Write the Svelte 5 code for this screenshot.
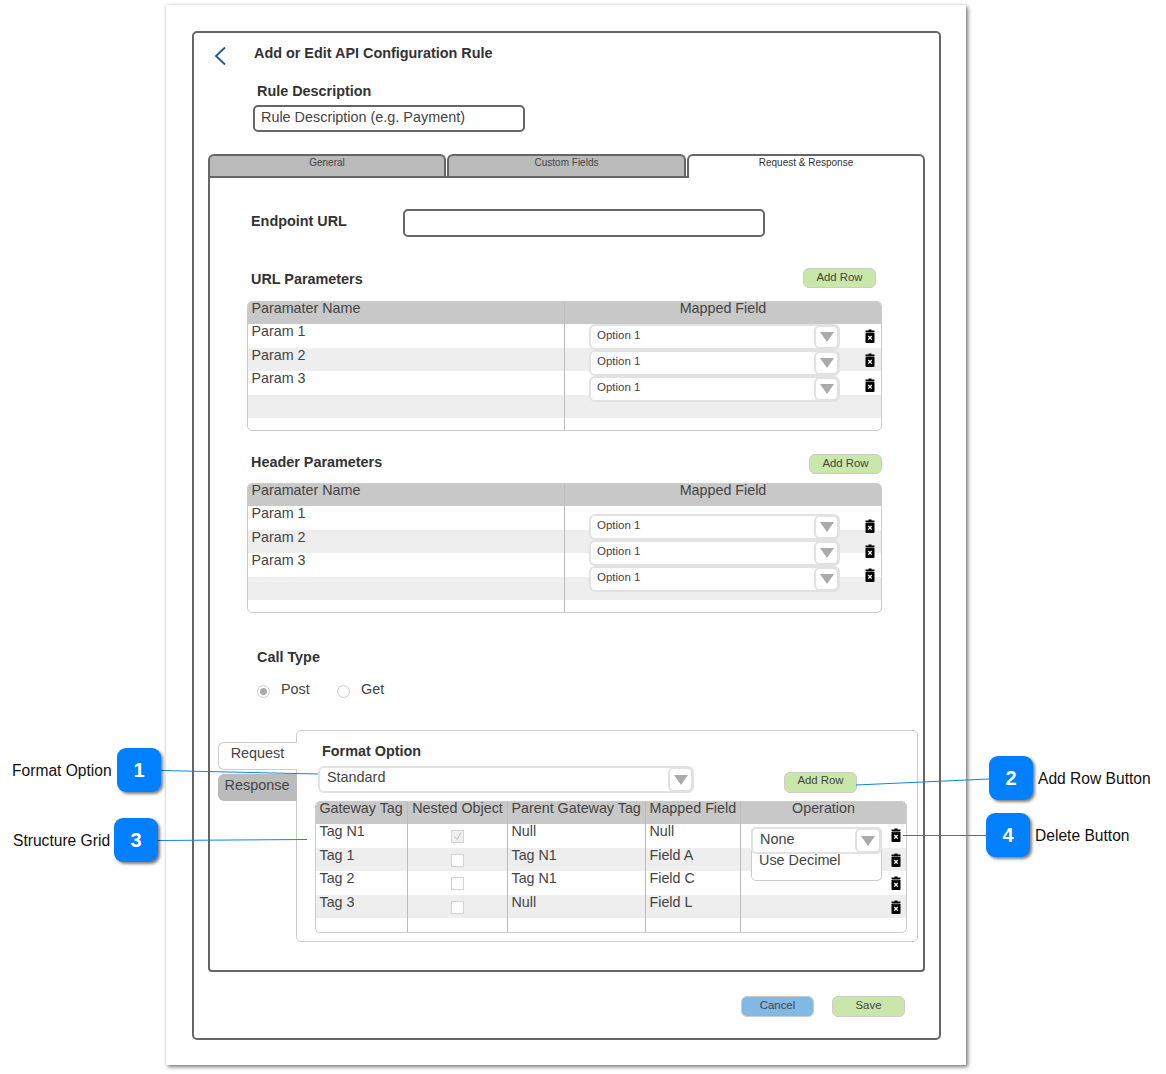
<script>
	const params = ['Param 1', 'Param 2', 'Param 3'];
	const urlTrash = [11.5, 35.5, 60.5];
	const headerTrash = [19.5, 44.5, 68.5];
	const formatRows = [
		{ tag: 'Tag N1', checked: true, parent: 'Null', field: 'Null', trash: 10 },
		{ tag: 'Tag 1', checked: false, parent: 'Tag N1', field: 'Field A', trash: 35 },
		{ tag: 'Tag 2', checked: false, parent: 'Tag N1', field: 'Field C', trash: 58 },
		{ tag: 'Tag 3', checked: false, parent: 'Null', field: 'Field L', trash: 82 }
	];
	const callouts = [
		{ n: 1, label: 'Format Option', x: 117, y: 748, labelX: 12, labelY: 761 },
		{ n: 2, label: 'Add Row Button', x: 989, y: 756, labelX: 1038, labelY: 769 },
		{ n: 3, label: 'Structure Grid', x: 114, y: 818, labelX: 13, labelY: 831 },
		{ n: 4, label: 'Delete Button', x: 986, y: 813, labelX: 1035, labelY: 826 }
	];
</script>

{#snippet arrow()}
	<span class="arrow"><i></i></span>
{/snippet}

{#snippet trash(top)}
	<svg class="trash" style:top="{top}px" width="10" height="14" viewBox="0 0 10 14">
		<path d="M3.5 0.5h3v1h3v1.5h-9v-1.500h3z" fill="#000" />
		<rect x="0.5" y="3.500" width="9" height="10.500" rx="1" fill="#000" />
		<path d="M3.300 7l3.400 3.600M6.700 7l-3.400 3.600" stroke="#fff" stroke-width="1.300" />
	</svg>
{/snippet}

{#snippet paramGrid(top, trashTops)}
	<div class="grid param-grid">
		<div class="row head"><span class="cell">Paramater Name</span><span class="cell center">Mapped Field</span></div>
		{#each [0, 1, 2, 3] as i}
			<div class="row" class:alt={i % 2 == 1}>
				<span class="cell">{params[i] ?? ''}</span><span class="cell"></span>
			</div>
		{/each}
		<div class="row end"><span class="cell"></span><span class="cell"></span></div>
		<div class="option-list" style:top="{top}px">
			{#each params as p}
				<div class="select option">Option 1{@render arrow()}</div>
			{/each}
		</div>
		{#each trashTops as t}
			{@render trash(t + 15)}
		{/each}
	</div>
{/snippet}

<div class="page">
	<div class="sheet">
		<div class="frame">
			<div class="title-row">
				<svg class="back" width="12" height="20" viewBox="0 0 12 20">
					<path d="M11 1.500L2 10l9 8.500" fill="none" stroke="#20587f" stroke-width="1.800" />
				</svg>
				<h1>Add or Edit API Configuration Rule</h1>
			</div>
			<div class="label desc-label">Rule Description</div>
			<div class="text-input desc-input">Rule Description (e.g. Payment)</div>

			<div class="tabs">
				<div class="tab">General</div>
				<div class="tab">Custom Fields</div>
				<div class="tab active">Request &amp; Response</div>
			</div>
			<div class="panel">
				<div class="endpoint">
					<div class="label">Endpoint URL</div>
					<div class="text-input url-input"></div>
				</div>

				<div class="section-head url-head">
					<div class="label">URL Parameters</div>
					<div class="btn green">Add Row</div>
				</div>
				{@render paramGrid(22, urlTrash)}

				<div class="section-head header-head">
					<div class="label">Header Parameters</div>
					<div class="btn green">Add Row</div>
				</div>
				{@render paramGrid(30, headerTrash)}

				<div class="label call-label">Call Type</div>
				<div class="radios">
					<span class="radio on"></span><span class="radio-text">Post</span>
					<span class="radio"></span><span class="radio-text">Get</span>
				</div>

				<div class="format">
					<div class="side-tabs">
						<div class="side-tab current">Request</div>
						<div class="side-tab">Response</div>
					</div>
					<div class="format-panel">
						<div class="label format-label">Format Option</div>
						<div class="format-row">
							<div class="select standard">Standard{@render arrow()}</div>
							<div class="btn green">Add Row</div>
						</div>
						<div class="grid format-grid">
							<div class="row head">
								<span class="cell">Gateway Tag</span>
								<span class="cell center">Nested Object</span>
								<span class="cell">Parent Gateway Tag</span>
								<span class="cell">Mapped Field</span>
								<span class="cell center">Operation</span>
							</div>
							{#each formatRows as r, i}
								<div class="row" class:alt={i % 2 == 1}>
									<span class="cell">{r.tag}</span>
									<span class="cell check-cell">
										<span class="check" class:checked={r.checked}>
											{#if r.checked}
												<svg width="11" height="11" viewBox="0 0 11 11">
													<path d="M2.500 5.500l2.500 3 4-7" fill="none" stroke="#bbb" />
												</svg>
											{/if}
										</span>
									</span>
									<span class="cell">{r.parent}</span>
									<span class="cell">{r.field}</span>
									<span class="cell"></span>
								</div>
							{/each}
							<div class="row end">
								<span class="cell"></span><span class="cell"></span><span class="cell"></span><span class="cell"></span><span class="cell"></span>
							</div>
							<div class="operation">
								<div class="select none">None{@render arrow()}</div>
								<div class="menu-item">Use Decimel</div>
							</div>
							{#each formatRows as r}
								{@render trash(r.trash + 15)}
							{/each}
						</div>
					</div>
				</div>
			</div>
			<div class="actions">
				<div class="btn blue">Cancel</div>
				<div class="btn green">Save</div>
			</div>
		</div>
	</div>

	<svg class="lines" width="1166" height="1074">
		<path d="M161 770.500L318 774M856 785L989 779M158 840.500L307 839.500M903 835.500H986" fill="none" stroke="#0a84f0" stroke-width="1" />
	</svg>
	{#each callouts as c}
		<div class="badge" style:left="{c.x}px" style:top="{c.y}px">{c.n}</div>
		<div class="badge-label" style:left="{c.labelX}px" style:top="{c.labelY}px">{c.label}</div>
	{/each}
</div>

<style>
	:global(body) {
		background: #fff;
		font-family: 'Liberation Sans', Arial, sans-serif;
		color: #444;
	}

	.page {
		position: relative;
		width: 1166px;
		height: 1074px;
		overflow: hidden;
		padding: 5px 0 0 166px;
		box-sizing: border-box;
	}

	.sheet {
		width: 800px;
		height: 1060px;
		padding: 26px 0 0 26px;
		box-sizing: border-box;
		background: #fff;
		box-shadow: 2px 2px 4px rgba(0, 0, 0, 0.5), 0 0 3px rgba(0, 0, 0, 0.12);
	}

	.frame {
		width: 749px;
		height: 1009px;
		box-sizing: border-box;
		border: 2px solid #666;
		border-radius: 5px;
	}

	.title-row {
		display: flex;
		align-items: center;
		height: 49px;
		padding: 0 0 9px 20px;
		box-sizing: border-box;
	}

	.back {
		margin-top: 5px;
	}

	h1 {
		margin: 0 0 0 28px;
		font-size: 14.400px;
		line-height: 18px;
		font-weight: 700;
		color: #333;
	}

	.label {
		font-size: 14.400px;
		line-height: 18px;
		font-weight: 700;
		color: #333;
	}

	.desc-label {
		margin-left: 63px;
	}

	.text-input {
		box-sizing: border-box;
		border: 2px solid #666;
		border-radius: 5px;
		background: #fff;
	}

	.desc-input {
		width: 272px;
		height: 27px;
		margin: 5px 0 0 59px;
		padding-left: 6px;
		font-size: 14.400px;
		line-height: 21px;
	}

	.tabs {
		display: flex;
		gap: 1px;
		margin: 22px 0 0 14px;
	}

	.tab {
		width: 238px;
		height: 22px;
		box-sizing: border-box;
		border: 2px solid #666;
		border-bottom: 0;
		border-radius: 6px 6px 0 0;
		background: #bbb;
		text-align: center;
		font-size: 10px;
		line-height: 14px;
	}

	.tab:nth-child(2) {
		width: 239px;
	}

	.tab.active {
		position: relative;
		z-index: 1;
		width: 238px;
		height: 24px;
		margin-bottom: -2px;
		background: #fff;
		color: #333;
	}

	.panel {
		width: 717px;
		height: 796px;
		margin-left: 14px;
		box-sizing: border-box;
		border: 2px solid #666;
		border-radius: 0 0 4px 4px;
	}

	.endpoint {
		display: flex;
		align-items: center;
		margin: 31px 0 0 41px;
	}

	.endpoint .label {
		width: 152px;
		margin-top: -4px;
	}

	.url-input {
		width: 362px;
		height: 28px;
	}

	.section-head {
		display: flex;
		align-items: center;
		justify-content: space-between;
		margin-left: 41px;
	}

	.url-head {
		width: 625px;
		margin-top: 31px;
		margin-bottom: 13px;
	}

	.url-head .label {
		margin-top: 2px;
	}

	.header-head {
		width: 631px;
		margin-top: 23px;
		margin-bottom: 9px;
	}

	.header-head .label {
		margin-top: -4px;
	}

	.btn {
		width: 73px;
		height: 20px;
		box-sizing: border-box;
		border: 1px solid #ccc;
		border-radius: 6px;
		text-align: center;
		font-size: 11.400px;
		line-height: 16px;
		color: #444;
	}

	.green {
		background: #c9e7a9;
	}

	.blue {
		background: #82b8e4;
	}

	.grid {
		position: relative;
		box-sizing: border-box;
		border: 1px solid #ccc;
		border-radius: 5px;
		overflow: hidden;
		background: #fff;
	}

	.param-grid {
		width: 635px;
		height: 130px;
		margin-left: 37px;
	}

	.row {
		display: grid;
		height: 23.500px;
	}

	.param-grid .row {
		grid-template-columns: 317px 316px;
	}

	.row.alt {
		background: #eee;
	}

	.row.head {
		height: 22px;
		background: #c8c8c8;
	}

	.row.end {
		height: 14px;
	}

	.cell {
		box-sizing: border-box;
		padding-left: 3.500px;
		border-right: 1px solid #bbb;
		font-size: 14.300px;
		line-height: 15px;
		white-space: nowrap;
	}

	.head .cell {
		line-height: 13px;
	}

	.cell:last-child {
		border-right: 0;
	}

	.center {
		text-align: center;
		padding-left: 0;
	}

	.option-list {
		position: absolute;
		left: 341px;
		width: 251px;
		display: flex;
		flex-direction: column;
	}

	.select {
		position: relative;
		box-sizing: border-box;
		border: 2px solid #e2e2e2;
		border-radius: 6px;
		background: #fff;
	}

	.option {
		height: 26px;
		padding-left: 6px;
		font-size: 11.500px;
		line-height: 19px;
	}

	.arrow {
		position: absolute;
		top: -1px;
		right: -1px;
		bottom: -1px;
		width: 25px;
		box-sizing: border-box;
		border: 2px solid #e2e2e2;
		border-radius: 6px;
		background: #fff;
		display: flex;
		align-items: center;
		justify-content: center;
	}

	.arrow i {
		width: 0;
		height: 0;
		border-left: 7px solid transparent;
		border-right: 7px solid transparent;
		border-top: 10px solid #aaa;
	}

	.trash {
		position: absolute;
		right: 6px;
	}

	.format-grid .trash {
		right: 5px;
		margin-top: 1px;
	}

	.call-label {
		margin: 35px 0 0 47px;
	}

	.radios {
		display: flex;
		align-items: center;
		height: 18px;
		margin: 16px 0 0 47px;
		font-size: 14.400px;
	}

	.radio {
		position: relative;
		width: 13px;
		height: 13px;
		margin-top: 1px;
		box-sizing: border-box;
		border: 1px solid #ccc;
		border-radius: 50%;
	}

	.radio.on::after {
		content: '';
		position: absolute;
		inset: 2px;
		border-radius: 50%;
		background: #aaa;
	}

	.radio-text {
		margin: -4px 27px 0 11px;
		width: 29px;
		line-height: 16px;
	}

	.format {
		display: flex;
		align-items: flex-start;
		margin: 30px 0 0 8px;
	}

	.side-tabs {
		width: 79px;
		margin-top: 12px;
		margin-right: -1px;
		position: relative;
		z-index: 1;
	}

	.side-tab {
		height: 27px;
		margin-top: 4px;
		padding-right: 1px;
		box-sizing: border-box;
		border-radius: 6px 0 0 6px;
		background: #bbb;
		text-align: center;
		font-size: 14.400px;
		line-height: 22px;
	}

	.side-tab.current {
		height: 28px;
		margin-top: 0;
		border: 1px solid #ccc;
		border-right: 0;
		background: #fff;
		line-height: 20px;
	}

	.format-panel {
		width: 622px;
		height: 212px;
		box-sizing: border-box;
		border: 1px solid #ccc;
		border-radius: 5px;
	}

	.format-label {
		margin: 11px 0 0 25px;
	}

	.format-row {
		display: flex;
		align-items: flex-end;
		margin: 6px 0 0 21px;
	}

	.standard {
		width: 376px;
		height: 27px;
		padding-left: 7px;
		font-size: 14.400px;
		line-height: 18px;
	}

	.format-row .btn {
		height: 21px;
		margin-left: 90px;
		line-height: 15px;
	}

	.format-grid {
		width: 592px;
		height: 132px;
		margin: 8px 0 0 18px;
	}

	.format-grid .row {
		grid-template-columns: 92px 100px 138px 95px 165px;
	}

	.check-cell {
		display: flex;
		justify-content: center;
		padding: 6px 0 0 0;
	}

	.check {
		width: 13px;
		height: 13px;
		box-sizing: border-box;
		border: 1px solid #d4d4d4;
		background: #fff;
		line-height: 0;
	}

	.check.checked {
		background: #f0f0f0;
	}

	.operation {
		position: absolute;
		left: 435px;
		top: 25px;
		width: 131px;
		height: 54px;
		box-sizing: border-box;
		border: 1px solid #ccc;
		border-radius: 5px;
		background: #fff;
	}

	.none {
		height: 27px;
		margin: -1px;
		padding-left: 7px;
		border-radius: 5px;
		font-size: 14.400px;
		line-height: 21px;
	}

	.none .arrow {
		width: 26px;
	}

	.menu-item {
		padding-left: 7px;
		font-size: 14.400px;
		line-height: 14px;
	}

	.actions {
		display: flex;
		justify-content: flex-end;
		gap: 18px;
		margin-top: 24px;
		padding-right: 34px;
	}

	.actions .btn {
		height: 21px;
		line-height: 17px;
	}

	.lines {
		position: absolute;
		left: 0;
		top: 0;
		pointer-events: none;
	}

	.badge {
		position: absolute;
		width: 44px;
		height: 44px;
		border-radius: 9px;
		background: #0080ff;
		box-shadow: 2px 2px 3px rgba(0, 0, 0, 0.5);
		color: #fff;
		font-size: 20px;
		font-weight: 700;
		line-height: 44px;
		text-align: center;
	}

	.badge-label {
		position: absolute;
		font-size: 15.600px;
		line-height: 20px;
		color: #111;
		white-space: nowrap;
	}
</style>
